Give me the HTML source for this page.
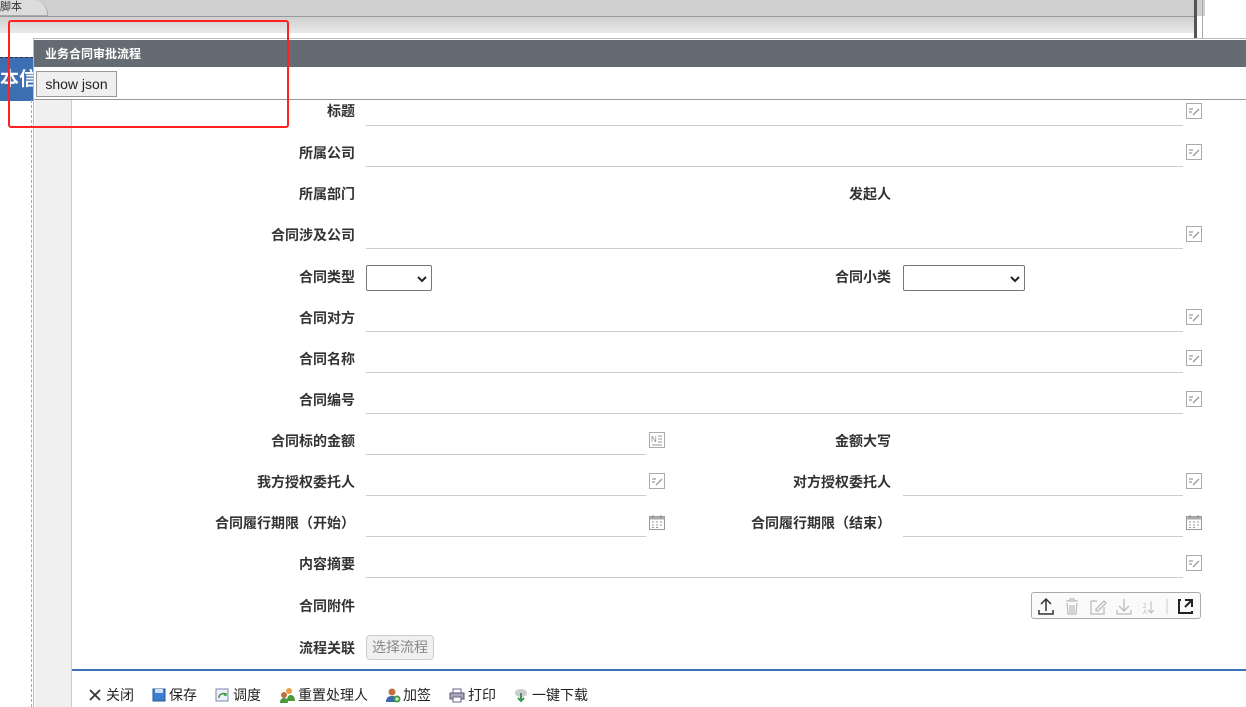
<!DOCTYPE html>
<html><head><meta charset="utf-8">
<style>
*{margin:0;padding:0;box-sizing:border-box}
body{width:1246px;height:707px;overflow:hidden;background:#fff;position:relative;font-family:"Liberation Sans","Noto Sans CJK SC",sans-serif;font-size:13px;color:#333}
.a{position:absolute}
.lb{position:absolute;font-weight:bold;text-align:right;white-space:nowrap;color:#333;font-size:14px;margin-top:-1px}
.in{position:absolute;height:1px;background:#ccc}
.ic{position:absolute;width:16px;height:16px}
.tb{position:absolute;top:685px;font-size:14px;color:#222;display:flex;align-items:center;white-space:nowrap}
</style></head><body>
<svg width="0" height="0" style="position:absolute">
<defs>
<symbol id="ed" viewBox="0 0 16 16"><rect x="0.5" y="0.5" width="15" height="15" fill="#fff" stroke="#aaa"/><path d="M3 6h4M3 9h3M7 12l6-6" stroke="#999" stroke-width="1.3" fill="none"/></symbol>
<symbol id="cal" viewBox="0 0 16 16"><rect x="0.5" y="2.5" width="15" height="13" fill="#fff" stroke="#999"/><rect x="0.5" y="2.5" width="15" height="3" fill="#aaa"/><path d="M4 1v3M12 1v3" stroke="#888"/><path d="M3 8h2M7 8h2M11 8h2M3 11h2M7 11h2M11 11h2M3 13.5h2M7 13.5h2" stroke="#999"/></symbol>
<symbol id="nm" viewBox="0 0 16 16"><rect x="0.5" y="0.5" width="15" height="15" fill="#fff" stroke="#aaa"/><text x="2" y="10" font-size="8" fill="#888" font-family="Liberation Sans">N</text><path d="M9 4h4M9 7h4M9 10h4M3 13h10" stroke="#999"/></symbol>
</defs></svg>

<div class="a" style="left:0;top:0;width:1246px;height:16px;background:#cfcfcf"></div>
<div class="a" style="left:0;top:0;width:48px;height:16px;background:#dcdcdc;border:1px solid #aaa;border-top:none;border-left:none;border-top-right-radius:14px"></div>
<div class="a" style="left:0;top:0;font-size:11px;color:#333;line-height:14px">脚本</div>
<div class="a" style="left:0;top:16px;width:1195px;height:1px;background:#999"></div>
<div class="a" style="left:0;top:17px;width:1195px;height:16px;background:linear-gradient(#cfcfcf,#eaeaea)"></div>
<div class="a" style="left:0;top:33px;width:33px;height:674px;background:#fff"></div>
<div class="a" style="left:1194px;top:0;width:3px;height:38px;background:#555"></div>
<div class="a" style="left:1202px;top:0;width:1px;height:38px;background:#aaa"></div>
<div class="a" style="left:1205px;top:0;width:41px;height:38px;background:#fff"></div>
<div class="a" style="left:0;top:57px;width:33px;height:44px;background:#3b6fb2;color:#fff;font-weight:bold;font-size:19px;line-height:44px;overflow:hidden;white-space:nowrap;border-top:1px dashed #334">本信</div>
<div class="a" style="left:31px;top:100px;width:2px;height:607px;border-left:1px dashed #aaa"></div>

<div class="a" style="left:33px;top:38px;width:1213px;height:669px;background:#fff;border-left:1px solid #bbb;border-top:1px solid #bbb"></div>
<div class="a" style="left:34px;top:40px;width:1212px;height:27px;background:#656b72;color:#fff;font-weight:bold;font-size:12px;line-height:28px;padding-left:11px">业务合同审批流程</div>
<div class="a" style="left:36px;top:71px;width:81px;height:26px;border:1px solid #999;background:#efefef;font-size:14px;line-height:24px;text-align:center;color:#222">show json</div>
<div class="a" style="left:34px;top:99px;width:1212px;height:1px;background:#999"></div>
<div class="a" style="left:35px;top:100px;width:37px;height:607px;background:#f0f0f0;border-right:1px solid #ccc"></div>

<div class="a" style="left:8px;top:20px;width:281px;height:108px;border:2px solid #f22;border-radius:3px"></div>

<div class="lb" style="right:891px;top:102px">标题</div><div class="in" style="left:366px;top:125px;width:817px"></div><svg class="ic" style="left:1186px;top:103px"><use href="#ed"/></svg>
<div class="lb" style="right:891px;top:144px">所属公司</div><div class="in" style="left:366px;top:166px;width:817px"></div><svg class="ic" style="left:1186px;top:144px"><use href="#ed"/></svg>
<div class="lb" style="right:891px;top:185px">所属部门</div><div class="lb" style="right:355px;top:185px">发起人</div>
<div class="lb" style="right:891px;top:226px">合同涉及公司</div><div class="in" style="left:366px;top:248px;width:817px"></div><svg class="ic" style="left:1186px;top:226px"><use href="#ed"/></svg>
<div class="lb" style="right:891px;top:268px">合同类型</div>
<div class="a" style="left:366px;top:265px;width:66px;height:26px;border:1px solid #767676;border-radius:2px"><svg class="a" style="left:50px;top:9px" width="10" height="8"><path d="M1 2l4 4 4-4" stroke="#222" stroke-width="2" fill="none"/></svg></div>
<div class="lb" style="right:355px;top:268px">合同小类</div>
<div class="a" style="left:903px;top:265px;width:122px;height:26px;border:1px solid #767676;border-radius:2px"><svg class="a" style="left:106px;top:9px" width="10" height="8"><path d="M1 2l4 4 4-4" stroke="#222" stroke-width="2" fill="none"/></svg></div>
<div class="lb" style="right:891px;top:309px">合同对方</div><div class="in" style="left:366px;top:331px;width:817px"></div><svg class="ic" style="left:1186px;top:309px"><use href="#ed"/></svg>
<div class="lb" style="right:891px;top:350px">合同名称</div><div class="in" style="left:366px;top:372px;width:817px"></div><svg class="ic" style="left:1186px;top:350px"><use href="#ed"/></svg>
<div class="lb" style="right:891px;top:391px">合同编号</div><div class="in" style="left:366px;top:413px;width:817px"></div><svg class="ic" style="left:1186px;top:391px"><use href="#ed"/></svg>
<div class="lb" style="right:891px;top:432px">合同标的金额</div><div class="in" style="left:366px;top:454px;width:280px"></div><svg class="ic" style="left:649px;top:432px"><use href="#nm"/></svg>
<div class="lb" style="right:355px;top:432px">金额大写</div>
<div class="lb" style="right:891px;top:473px">我方授权委托人</div><div class="in" style="left:366px;top:495px;width:280px"></div><svg class="ic" style="left:649px;top:473px"><use href="#ed"/></svg>
<div class="lb" style="right:355px;top:473px">对方授权委托人</div><div class="in" style="left:903px;top:495px;width:280px"></div><svg class="ic" style="left:1186px;top:473px"><use href="#ed"/></svg>
<div class="lb" style="right:891px;top:514px">合同履行期限（开始）</div><div class="in" style="left:366px;top:536px;width:280px"></div><svg class="ic" style="left:649px;top:514px"><use href="#cal"/></svg>
<div class="lb" style="right:355px;top:514px">合同履行期限（结束）</div><div class="in" style="left:903px;top:536px;width:280px"></div><svg class="ic" style="left:1186px;top:514px"><use href="#cal"/></svg>
<div class="lb" style="right:891px;top:555px">内容摘要</div><div class="in" style="left:366px;top:577px;width:817px"></div><svg class="ic" style="left:1186px;top:555px"><use href="#ed"/></svg>
<div class="lb" style="right:891px;top:597px">合同附件</div>
<div class="a" style="left:1031px;top:592px;width:170px;height:27px;border:1px solid #aaa;border-radius:3px;background:#fafafa">
<svg width="170" height="27" class="a" style="left:0;top:0">
<path d="M14 6v12M9 11l5-5 5 5M7 17v4h14v-4" stroke="#333" stroke-width="1.5" fill="none"/>
<path d="M34 8h12M38 8V6h4v2M35 10l1 11h8l1-11M38 12v8M40 12v8M42 12v8" stroke="#bbb" stroke-width="1.2" fill="none"/>
<path d="M59 8h6M59 8v13h13v-7M64 16l8-8 2 2-8 8h-2z" stroke="#bbb" stroke-width="1.3" fill="none"/>
<path d="M92 6v12M87 13l5 5 5-5M85 17v4h14v-4" stroke="#bbb" stroke-width="1.3" fill="none"/>
<text x="111" y="15" font-size="6" fill="#bbb">Z</text><text x="111" y="21" font-size="6" fill="#bbb">A</text><path d="M119 8v12M116 17l3 3 3-3" stroke="#bbb" fill="none"/>
<path d="M135 6v15" stroke="#ccc"/>
<path d="M149 7h-2v13h13v-2M153 7h7v7M160 7l-7 7" stroke="#222" stroke-width="2" fill="none"/>
</svg></div>
<div class="lb" style="right:891px;top:639px">流程关联</div>
<div class="a" style="left:366px;top:635px;width:68px;height:25px;border:1px solid #ccc;border-radius:4px;background:#f0f0f0;color:#888;font-size:14px;line-height:23px;text-align:center">选择流程</div>

<div class="a" style="left:72px;top:669px;width:1174px;height:2px;background:#3b73b5"></div>

<div class="tb" style="left:88px"><svg width="14" height="14"><path d="M2 2l10 10M12 2L2 12" stroke="#333" stroke-width="1.8"/></svg><span style="margin-left:4px">关闭</span></div>
<div class="tb" style="left:152px"><svg width="14" height="14"><rect x="1" y="1" width="12" height="12" fill="#3a7fd0" stroke="#2a5a9a"/><rect x="3" y="1" width="8" height="4" fill="#cfe0f5"/></svg><span style="margin-left:3px">保存</span></div>
<div class="tb" style="left:215px"><svg width="15" height="15"><rect x="1" y="1" width="12" height="12" fill="#eef" stroke="#7a8aa8"/><path d="M4 10a4 4 0 0 1 7-3M11 5v2h-2" stroke="#3a9a3a" stroke-width="1.5" fill="none"/></svg><span style="margin-left:3px">调度</span></div>
<div class="tb" style="left:279px"><svg width="16" height="16"><circle cx="10" cy="4" r="3" fill="#e8a040"/><circle cx="5" cy="8" r="3" fill="#c07040"/><path d="M1 16c0-4 2-5 4-5s4 1 4 5zM8 14c0-5 2-6 4-6s4 2 4 6z" fill="#4a9a3a"/></svg><span style="margin-left:3px">重置处理人</span></div>
<div class="tb" style="left:386px"><svg width="15" height="16"><circle cx="6" cy="5" r="3.5" fill="#c07040"/><path d="M0 15c0-5 3-6 6-6s6 1 6 6z" fill="#3a6ab0"/><circle cx="11" cy="12" r="3.5" fill="#3a9a3a"/><path d="M11 10v4M9 12h4" stroke="#fff"/></svg><span style="margin-left:2px">加签</span></div>
<div class="tb" style="left:449px"><svg width="16" height="15"><rect x="4" y="1" width="8" height="5" fill="#fff" stroke="#668"/><rect x="1" y="5" width="14" height="6" fill="#aab" stroke="#557"/><rect x="4" y="9" width="8" height="5" fill="#fff" stroke="#668"/></svg><span style="margin-left:3px">打印</span></div>
<div class="tb" style="left:513px"><svg width="16" height="16"><ellipse cx="8" cy="6" rx="6" ry="4" fill="#ccc"/><path d="M8 6v8M5 11l3 3 3-3" stroke="#3a9a5a" stroke-width="2" fill="none"/></svg><span style="margin-left:3px">一键下载</span></div>
</body></html>
